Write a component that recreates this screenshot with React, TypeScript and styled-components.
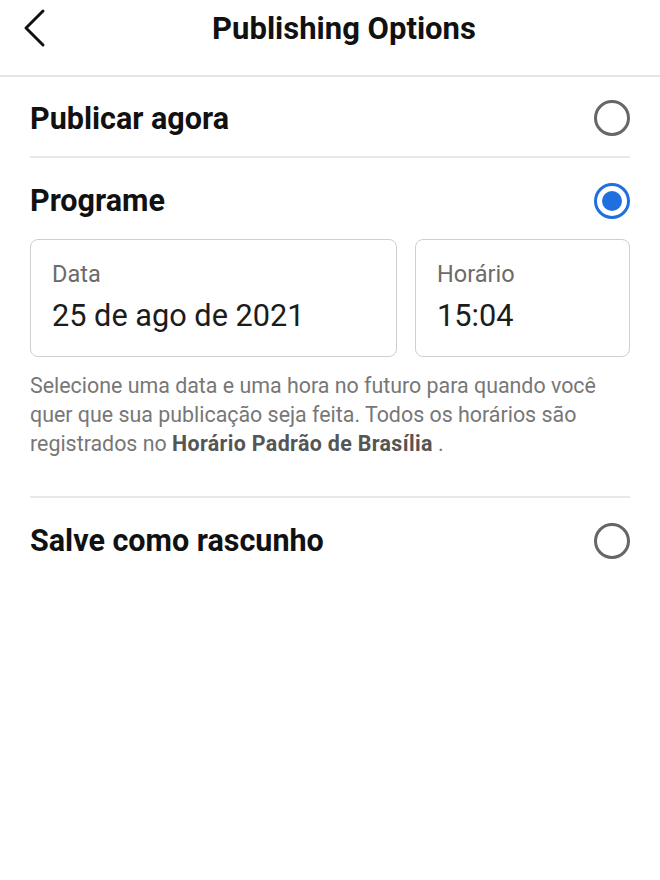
import React from "react";
import styled, { createGlobalStyle } from "styled-components";

const Global = createGlobalStyle`
  html, body { margin: 0; padding: 0; background: #ffffff; }
  body { font-family: Roboto, "Noto Sans", Arial, sans-serif; -webkit-font-smoothing: antialiased; }
`;

const Page = styled.div`
  width: 660px;
  min-height: 880px;
  background: #fff;
`;

const Header = styled.header`
  display: flex;
  align-items: center;
  border-bottom: 2px solid #e5e5e5;
  padding: 0 0 0 16px;
  box-sizing: border-box;
  height: 77px;
`;

const BackButton = styled.button`
  width: 36px;
  height: 44px;
  margin-top: -20px;
  padding: 0;
  border: none;
  background: none;
  display: flex;
  align-items: center;
  justify-content: center;
`;

const Title = styled.h1`
  flex: 1;
  margin: -19px 0 0 0;
  padding-right: 24px;
  text-align: center;
  font-size: 31px;
  font-weight: 700;
  color: #111;
`;

const Body = styled.div`
  padding: 0 30px;
`;

const OptionRow = styled.div<{ $divider?: boolean; $offset?: number }>`
  height: 81px;
  display: flex;
  align-items: center;
  justify-content: space-between;
  border-bottom: ${(p) => (p.$divider ? "2px solid #e8e8e8" : "none")};
  box-sizing: border-box;
  padding-top: ${(p) => p.$offset ?? 0}px;
`;

const OptionLabel = styled.span`
  font-size: 30.5px;
  font-weight: 700;
  color: #111;
`;

const Radio = styled.span<{ $checked?: boolean }>`
  width: 36px;
  height: 36px;
  box-sizing: border-box;
  border-radius: 50%;
  border: 3px solid ${(p) => (p.$checked ? "#1f6fde" : "#666")};
  display: flex;
  align-items: center;
  justify-content: center;
  &::after {
    content: "";
    display: ${(p) => (p.$checked ? "block" : "none")};
    width: 20px;
    height: 20px;
    border-radius: 50%;
    background: #1f6fde;
  }
`;

const Fields = styled.div`
  display: flex;
  gap: 18px;
`;

const Field = styled.div<{ $width?: number }>`
  flex: ${(p) => (p.$width ? `0 0 ${p.$width}px` : "1")};
  height: 118px;
  box-sizing: border-box;
  border: 1.5px solid #cfcfcf;
  border-radius: 8px;
  padding: 20px 20px 0 21px;
  display: flex;
  flex-direction: column;
`;

const FieldLabel = styled.span`
  font-size: 23.5px;
  color: #6b6b6b;
  line-height: 28px;
`;

const FieldValue = styled.span`
  font-size: 30.7px;
  color: #1c1c1c;
  line-height: 38px;
  margin-top: 9px;
`;

const Help = styled.p`
  margin: 14px 0 0 0;
  padding-bottom: 38px;
  font-size: 21.4px;
  line-height: 29px;
  color: #777;
  border-bottom: 2px solid #e8e8e8;
`;

const Emphasis = styled.strong`
  color: #555;
  font-weight: 700;
  letter-spacing: 0.35px;
`;

export default function App() {
  return (
    <Page>
      <Global />
      <Header>
        <BackButton aria-label="Voltar">
          <svg width="26" height="40" viewBox="0 0 26 40" fill="none">
            <path d="M22 3 L5 20 L22 37" stroke="#111" strokeWidth="3" strokeLinecap="round" strokeLinejoin="round" />
          </svg>
        </BackButton>
        <Title>Publishing Options</Title>
      </Header>
      <Body>
        <OptionRow $divider $offset={3}>
          <OptionLabel>Publicar agora</OptionLabel>
          <Radio />
        </OptionRow>
        <OptionRow $offset={4}>
          <OptionLabel>Programe</OptionLabel>
          <Radio $checked />
        </OptionRow>
        <Fields>
          <Field $width={367}>
            <FieldLabel>Data</FieldLabel>
            <FieldValue>25 de ago de 2021</FieldValue>
          </Field>
          <Field>
            <FieldLabel>Horário</FieldLabel>
            <FieldValue>15:04</FieldValue>
          </Field>
        </Fields>
        <Help>
          Selecione uma data e uma hora no futuro para quando você quer que sua publicação seja feita. Todos os horários são registrados no <Emphasis>Horário Padrão de Brasília</Emphasis> .
        </Help>
        <OptionRow $offset={4}>
          <OptionLabel>Salve como rascunho</OptionLabel>
          <Radio />
        </OptionRow>
      </Body>
    </Page>
  );
}
